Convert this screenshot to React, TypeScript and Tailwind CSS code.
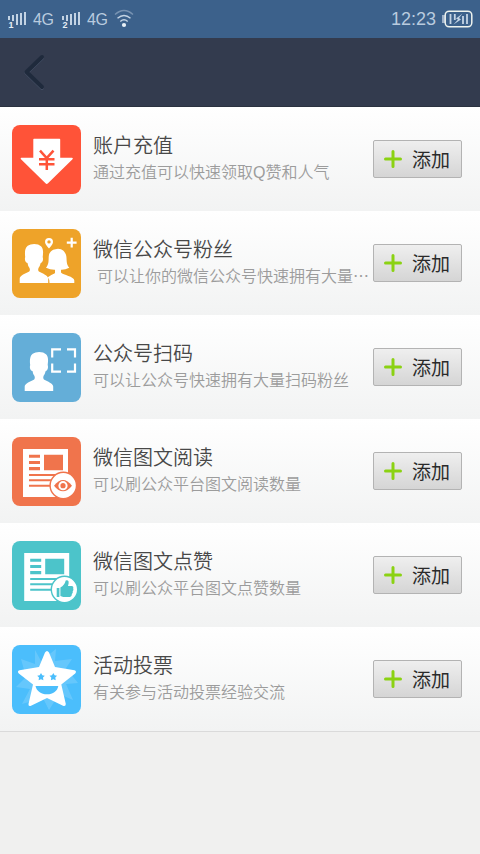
import type { ReactNode } from "react";
import clsx from "clsx";

interface Service {
    id: number;
    title: string;
    description: string;
    indent?: boolean;
    color: string;
    icon: ReactNode;
}

const STAR = "M37 7.5 L43 22 L62.5 25.2 Q65 26.2 63.2 28.5 L49.3 39.5 L53.8 59 Q53.8 61.8 51 60.8 L35 53 L19 60.8 Q16.2 61.8 16.5 59 L21 39.5 L6.8 28.5 Q4.8 26.2 7.5 25.2 L27 22 L33 7.5 Q35 4.5 37 7.5 Z";

// Head and shoulders, shared by the follower and scan icons
function Man() {
    return (
        <path
            fill="#fff"
            d="M0 39 V34.5 C0 31.5 6 29.3 9.5 27.5 Q10.7 26.5 9.8 24 Q8.2 22 7.8 19 C5.3 18.5 4.8 15.3 5.5 13 C5 9 5 4 8 1.8 Q10.5 0 14.5 0 Q19 0 21.3 2.2 C24 5 23.5 9 23 13 C23.8 15.5 23 18.5 21 19 Q20.3 22 18.8 24 Q18 26.5 19.2 27.5 C23 29.5 28.5 31.5 28.5 34.5 V39 Z"
        />
    );
}

function Article({ color }: { color: string }) {
    return (
        <>
            <path fill="#fff" d="M11 12 H56 V60 H11 Z" />
            <path
                fill={color}
                d="M17 17.7 H28 V20.8 H17 Z M17 24 H28 V27 H17 Z M17 30 H28 V33.2 H17 Z M32 17.7 H51 V33.2 H32 Z M17 37 H51 V39 H17 Z M17 42.3 H42 V44.3 H17 Z M17 47.7 H40 V49.7 H17 Z"
            />
            <circle cx="51.3" cy="48.5" r="13.2" fill="#fff" stroke={color} strokeWidth="1.4" />
        </>
    );
}

const services: Service[] = [
    {
        id: 1,
        title: "账户充值",
        description: "通过充值可以快速领取Q赞和人气",
        color: "#ff5338",
        icon: (
            <>
                <path fill="#fff" d="M22 13.7 H47.5 Q48.2 13.7 48.2 14.5 V32.7 H60 Q61.5 33 60.5 34.2 L36 58.3 Q34.7 59.5 33.5 58.3 L9 34.2 Q8 33 9.3 32.7 H21.3 V14.5 Q21.3 13.7 22 13.7 Z" />
                <path fill="none" stroke="#ff5338" strokeWidth="2.5" d="M28 25.7 L34.7 33.2 L41.5 25.7 M27 34.3 H42.5 M27 39.2 H42.5 M34.8 33 V45" />
            </>
        ),
    },
    {
        id: 2,
        title: "微信公众号粉丝",
        description: "可以让你的微信公众号快速拥有大量⋯",
        indent: true,
        color: "#eea329",
        icon: (
            <>
                <g transform="translate(7.7 15)">
                    <Man />
                </g>
                <path fill="#fff" d="M37.5 54 Q37.5 50 35.8 48.2 C39 45.8 42.5 45 43 43.7 V40.8 Q38.5 41 34 38.8 C37 35 36.5 32 36.7 28 C36.8 23.5 40 20.5 43.5 20.3 L46 19.7 C51 19.7 54.5 24 54.5 29 C54.7 34 55 36 57.3 38.8 Q53 41 49 40.8 V43.5 C51 46 62.3 47.5 62.3 51.5 V54 Z" />
                <path fill="#fff" fillRule="evenodd" d="M37 9 A4 4 0 0 1 41 13 Q41 15 37 19.5 Q33 15 33 13 A4 4 0 0 1 37 9 Z M37 11.2 A1.7 1.7 0 1 0 37 14.6 A1.7 1.7 0 1 0 37 11.2 Z" />
                <path stroke="#fff" strokeWidth="2.2" d="M54.8 13.7 H64.6 M59.7 8.8 V18.6" />
            </>
        ),
    },
    {
        id: 3,
        title: "公众号扫码",
        description: "可以让公众号快速拥有大量扫码粉丝",
        color: "#64aed8",
        icon: (
            <>
                <g transform="translate(12.7 19)">
                    <Man />
                </g>
                <path fill="none" stroke="#fff" strokeWidth="2.2" d="M40.2 24.5 V16.4 H49 M55 16.4 H63 V24.5 M63 30.5 V38.6 H55 M49 38.6 H40.2 V30.5" />
            </>
        ),
    },
    {
        id: 4,
        title: "微信图文阅读",
        description: "可以刷公众平台图文阅读数量",
        color: "#f0744c",
        icon: (
            <>
                <Article color="#f0744c" />
                <path fill="#f0744c" d="M42 48.7 Q51 37.5 60 48.7 Q51 59.9 42 48.7 Z" />
                <circle cx="51" cy="48.7" r="4.6" fill="#fff" />
                <circle cx="51" cy="48.7" r="2.6" fill="#f0744c" />
            </>
        ),
    },
    {
        id: 5,
        title: "微信图文点赞",
        description: "可以刷公众平台图文点赞数量",
        color: "#4cc4ca",
        icon: (
            <g transform="translate(1.2 0)">
                <Article color="#4cc4ca" />
                <path fill="#4cc4ca" d="M43.5 47 H46.2 V56 H43.5 Z M47.2 46.5 Q51.5 44 52.5 39.5 Q54.5 38.5 55.4 40.5 Q55.7 42 54.8 45 H59 Q60.8 45.5 60 47.5 Q60.8 49 59.5 50.3 Q60 52 58.7 53 Q58.8 55.5 56.8 56 H50 L47.2 55 Z" />
            </g>
        ),
    },
    {
        id: 6,
        title: "活动投票",
        description: "有关参与活动投票经验交流",
        color: "#4bbefc",
        icon: (
            <>
                <path fill="#fff" fillOpacity="0.15" d="M23 5 L29 16 L44 4 L43 16 L60 14 L54 23 L66 38 L54 39 L61 55 L47 49 L37 65 L31 53 L10 59 L18 44 L4 42 L14 32 L9 14 L23 19 Z" />
                <path fill="#fff" d={STAR} />
                <path fill="#4bbefc" d="M23.5 41 H46.3 C45.5 46 41 49.3 35 49.3 C29 49.3 24.5 46 23.5 41 Z" />
                <path id="eye" fill="#4bbefc" d="M29 28 L30.3 30.3 L32.8 30.7 L31 32.6 L31.4 35.3 L29 34.2 L26.6 35.3 L27 32.6 L25.2 30.7 L27.7 30.3 Z" />
                <use href="#eye" x="12.3" />
            </>
        ),
    },
];

function Signal({ sim }: { sim: number }) {
    return (
        <svg width="20" height="20" viewBox="0 0 20 20" className="shrink-0">
            <path fill="#c3d3e4" d="M0 7 H2 V11 H0 Z M4 6 H6 V12 H4 Z M8 5 H10 V16 H8 Z M12 4 H14 V16 H12 Z M16 3 H18 V16 H16 Z" />
            <text x="0.5" y="18.7" fontSize="9" fontWeight="bold" fill="#e6eef6" fontFamily="Liberation Sans, sans-serif">
                {sim}
            </text>
        </svg>
    );
}

function StatusBar() {
    return (
        <div className="flex h-[38px] items-center bg-[#3c618b] pr-[7px] pl-2 text-[#b9cbdf]">
            <Signal sim={1} />
            <span className="ml-[5px] w-[29px] pt-px text-[16px] leading-none tracking-[-0.3px]">4G</span>
            <Signal sim={2} />
            <span className="ml-[5px] w-[27px] pt-px text-[16px] leading-none tracking-[-0.3px]">4G</span>
            <svg width="20" height="20" viewBox="0 0 20 20" fill="none" strokeWidth="1.4">
                <path stroke="#7893b2" d="M1 5.5 Q10 -2.5 19 5.5" />
                <path stroke="#c5d4e4" d="M3.5 9.3 Q10 3.5 16.5 9.3" />
                <path stroke="#c5d4e4" d="M6.3 12.4 Q10 9 13.7 12.4" />
                <circle cx="10" cy="16" r="2.1" fill="#eaf1f7" />
            </svg>
            <span className="ml-auto text-[18px] leading-none">12:23</span>
            <svg width="32" height="18" viewBox="0 0 32 18" className="ml-[5px]" fill="none">
                <path fill="#9fb2c9" d="M1 5 H4 V13 H1 Z" />
                <rect x="4.2" y="1.2" width="26.6" height="15.6" rx="4" stroke="#eef3ee" strokeWidth="1.5" />
                <path stroke="#c3d3e4" strokeWidth="1.8" d="M9.5 4 V14 M13.8 4 V10 M22 6 V14 M26 4 V14" />
                <path fill="#c3d3e4" d="M21.5 3.5 L15 8.5 L17 9.5 L12.5 14.5 L20 9.5 L18 8 Z" />
            </svg>
        </div>
    );
}

function ServiceRow({ service }: { service: Service }) {
    return (
        <li className="flex h-[104px] items-center bg-gradient-to-b from-white to-[#f2f3f3] pr-[18px] pl-3">
            <svg width="69" height="69" viewBox="0 0 69 69" className="shrink-0">
                <rect width="69" height="69" rx="8" fill={service.color} />
                {service.icon}
            </svg>
            <div className="ml-3 min-w-0 flex-1 pb-px whitespace-nowrap">
                <h2 className="text-[20px] leading-[27px] font-[350] text-[#484848]">{service.title}</h2>
                <p className={clsx("text-[16px] leading-[25px] font-[350] text-[#9c9c9c]", service.indent && "pl-1")}>
                    {service.description}
                </p>
            </div>
            <button className="flex h-[38px] w-[89px] shrink-0 items-center rounded-[2px] border border-[#b3b3b3] bg-gradient-to-b from-[#efefef] to-[#d5d5d5] pl-[10px] text-[19px] text-[#2a2a2a]">
                <svg width="18" height="18" viewBox="0 0 18 18" className="mr-[10px] shrink-0">
                    <path stroke="#8bd213" strokeWidth="3" strokeLinecap="round" d="M1.5 9 H16.5 M9 1.5 V16.5" />
                </svg>
                <span className="pt-[5px]">添加</span>
            </button>
        </li>
    );
}

export default function App() {
    return (
        <div className="flex h-[854px] w-[480px] flex-col overflow-hidden bg-[#f0f0ef] font-['Liberation_Sans','Noto_Sans_CJK_SC',sans-serif]">
            <StatusBar />
            <header className="flex h-[69px] items-center border-b border-[#2b3240] bg-[#333b4e] pl-[23px]">
                <button aria-label="返回">
                    <svg width="23" height="36" viewBox="0 0 23 36" fill="none" strokeLinecap="round" strokeLinejoin="round">
                        <path stroke="#465166" strokeWidth="4" d="M19 3.8 L3.5 18.8 L19 33.8" />
                        <path stroke="#1f2a3c" strokeWidth="4" d="M19 3 L3.5 18 L19 33" />
                    </svg>
                </button>
            </header>
            <ul className="border-b border-[#dadada]">
                {services.map((service) => (
                    <ServiceRow key={service.id} service={service} />
                ))}
            </ul>
        </div>
    );
}
